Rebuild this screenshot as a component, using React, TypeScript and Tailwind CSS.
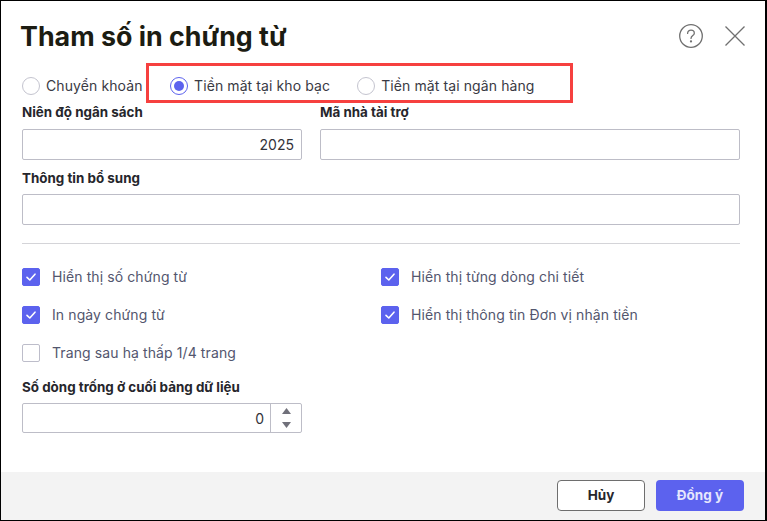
import React from 'react';

const Radio = ({ label, checked = false }: { label: string; checked?: boolean }) => (
  <div className="flex items-center gap-[6px]">
    <div className={`w-[18px] h-[18px] rounded-full border flex items-center justify-center bg-white ${checked ? 'border-[#5c62ee]' : 'border-[#c4c4cf]'}`}>
      {checked && <div className="w-[10px] h-[10px] rounded-full bg-[#5c62ee]" />}
    </div>
    <span className="text-[14px] leading-[18px] tracking-[0.1px] text-[#3a3a44]">{label}</span>
  </div>
);

const Check = ({ label, checked = false }: { label: string; checked?: boolean }) => (
  <div className="flex items-center gap-[12px] h-[18px]">
    <div className={`w-[18px] h-[18px] rounded-[2px] border flex items-center justify-center ${checked ? 'bg-[#5c62ee] border-[#5c62ee]' : 'bg-white border-[#bdbdca]'}`}>
      {checked && (
        <svg width="12" height="12" viewBox="0 0 12 12" fill="none">
          <path d="M2 6.4 L4.8 9 L10 3.2" stroke="white" strokeWidth="1.6" strokeLinecap="round" strokeLinejoin="round" />
        </svg>
      )}
    </div>
    <span className="text-[14px] leading-[18px] tracking-[0.1px] text-[#53566e]">{label}</span>
  </div>
);

const Field = ({ label, value, className, tight = false }: { label: string; value?: string; className?: string; tight?: boolean }) => (
  <div className={className}>
    <div className="text-[13.4px] leading-[16px] font-bold text-[#26262c] h-[16px]">{label}</div>
    <div className={`${tight ? 'mt-[8px]' : 'mt-[9px]'} h-[31px] border border-[#bdbdc7] rounded-[2px] bg-white flex items-center justify-end px-[7px] text-[14px] text-[#33333a]`}>
      {value}
    </div>
  </div>
);

export default function App() {
  return (
    <div className="w-[767px] h-[521px] bg-black overflow-hidden pt-[1px] pl-[1px] pr-[2px] pb-[1px] font-['Inter',sans-serif]">
      <div className="w-full h-full bg-white flex flex-col">
        <div className="flex items-center justify-between pl-[19px] pr-[20px] h-[62px] pt-[7px] shrink-0">
          <h1 className="text-[26.8px] leading-[34px] font-bold text-[#1c1c12]">Tham số in chứng từ</h1>
          <div className="flex items-center gap-[22px]">
            <svg width="24" height="24" viewBox="0 0 24 24" fill="none" stroke="#707070" strokeWidth="1.3">
              <circle cx="12" cy="12" r="11.3" />
              <path d="M8.6 9.4 C8.6 7.4 10.1 6.2 12 6.2 C13.9 6.2 15.3 7.4 15.3 9.2 C15.3 11.6 12 11.6 12 14.4" strokeLinecap="round" />
              <circle cx="12" cy="17.4" r="0.5" fill="#707070" />
            </svg>
            <svg width="20" height="20" viewBox="0 0 20 20" fill="none" stroke="#707070" strokeWidth="1.3">
              <path d="M0.5 0.5 L19.5 19.5 M19.5 0.5 L0.5 19.5" />
            </svg>
          </div>
        </div>

        <div className="pl-[21px] pr-[25px] flex-1">
          <div className="flex h-[40px]">
            <div className="pt-[14px] w-[124px] shrink-0">
              <Radio label="Chuyển khoản" />
            </div>
            <div className="w-[427px] h-[40px] border-[3px] border-[#f6403f] pl-[21px] pt-[11px] flex items-start gap-[27px]">
              <Radio label="Tiền mặt tại kho bạc" checked />
              <Radio label="Tiền mặt tại ngân hàng" />
            </div>
          </div>

          <div className="flex gap-[18px] mt-[1px]">
            <Field className="w-[280px]" label="Niên độ ngân sách" value="2025" />
            <Field className="w-[420px]" label="Mã nhà tài trợ" />
          </div>
          <Field className="w-[718px] mt-[10px]" label="Thông tin bổ sung" tight />

          <div className="w-[718px] h-[1px] bg-[#d4d4d8] mt-[18px]" />

          <div className="grid grid-cols-[359px_359px] gap-y-[20px] mt-[24px]">
            <Check label="Hiển thị số chứng từ" checked />
            <Check label="Hiển thị từng dòng chi tiết" checked />
            <Check label="In ngày chứng từ" checked />
            <Check label="Hiển thị thông tin Đơn vị nhận tiền" checked />
            <Check label="Trang sau hạ thấp 1/4 trang" />
          </div>

          <div className="text-[13.4px] leading-[16px] font-bold text-[#26262c] mt-[17px]">Số dòng trống ở cuối bảng dữ liệu</div>
          <div className="mt-[8px] w-[280px] h-[30px] border border-[#bdbdc7] rounded-[2px] flex text-[14px] text-[#33333a]">
            <div className="flex-1 flex items-center justify-end pr-[6px]">0</div>
            <div className="w-[31px] border-l border-[#bdbdc7] flex flex-col items-center justify-center gap-[8px]">
              <svg width="9" height="6" viewBox="0 0 9 6"><path d="M4.5 0 L9 6 L0 6 Z" fill="#70707a" /></svg>
              <svg width="9" height="6" viewBox="0 0 9 6"><path d="M0 0 L9 0 L4.5 6 Z" fill="#70707a" /></svg>
            </div>
          </div>
        </div>

        <div className="h-[48px] bg-[#f3f3f3] flex items-start justify-end gap-[11px] pt-[8px] pr-[21px] shrink-0">
          <button className="w-[88px] h-[31px] bg-white border border-[#6e6e6e] rounded-[4px] text-[13.5px] font-bold text-[#26262c]">Hủy</button>
          <button className="w-[88px] h-[31px] bg-[#5c62ee] rounded-[4px] text-[13.5px] font-bold text-[#e6e7fd]">Đồng ý</button>
        </div>
      </div>
    </div>
  );
}
